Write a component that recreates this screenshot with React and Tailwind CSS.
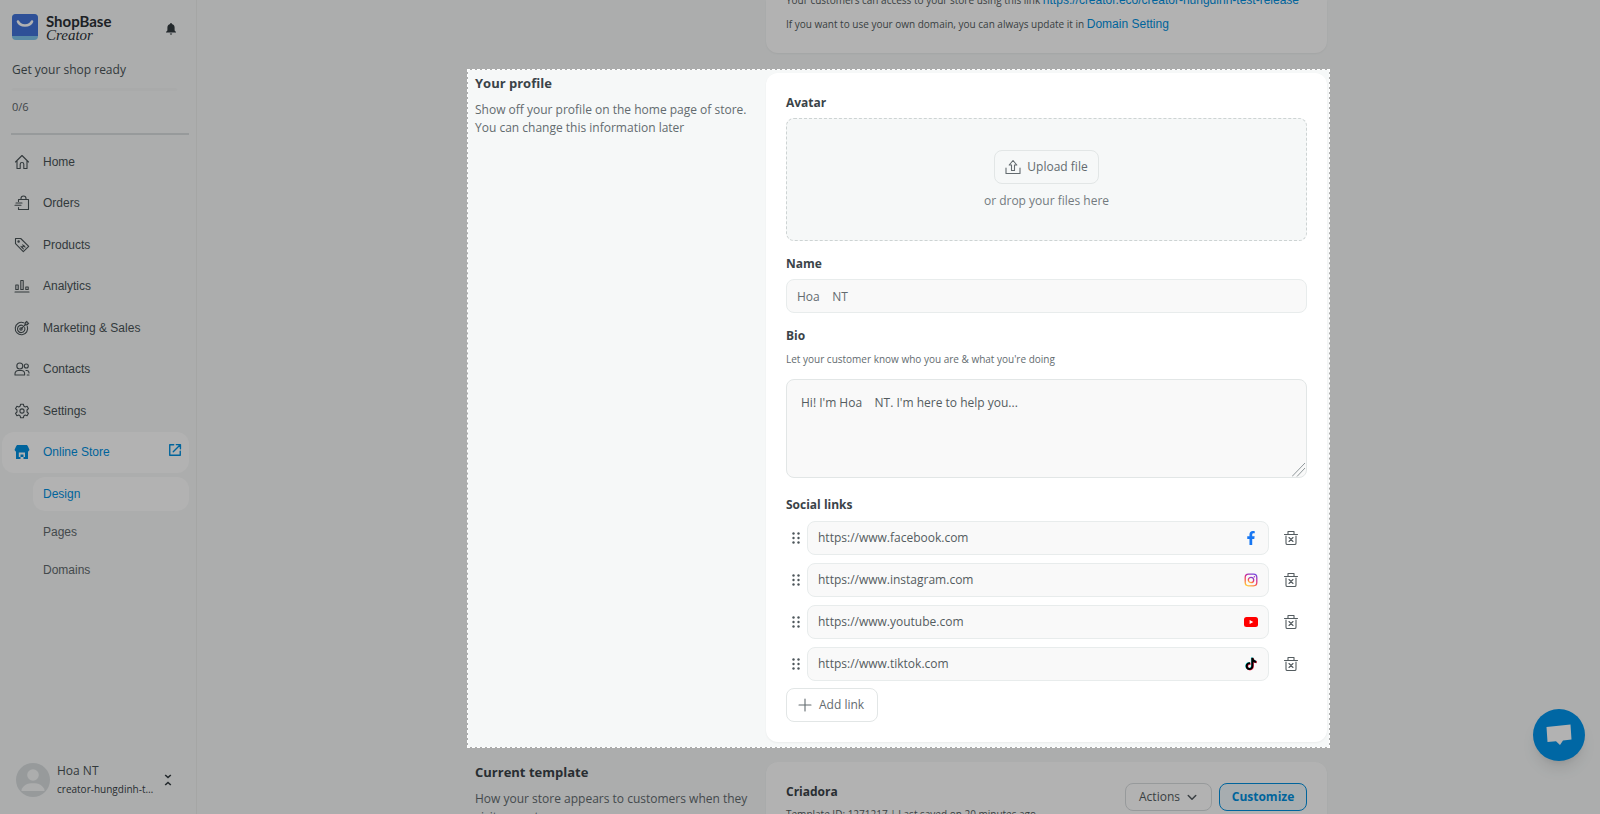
import { useState } from "react";
import { FaFacebookF } from "react-icons/fa";

const navItems = [
  { label: "Home", icon: HomeIcon },
  { label: "Orders", icon: OrdersIcon },
  { label: "Products", icon: ProductsIcon },
  { label: "Analytics", icon: AnalyticsIcon },
  { label: "Marketing & Sales", icon: MarketingIcon },
  { label: "Contacts", icon: ContactsIcon },
  { label: "Settings", icon: SettingsIcon },
];

const defaultLinks = [
  { id: "facebook", url: "https://www.facebook.com", icon: FacebookIcon },
  { id: "instagram", url: "https://www.instagram.com", icon: InstagramIcon },
  { id: "youtube", url: "https://www.youtube.com", icon: YoutubeIcon },
  { id: "tiktok", url: "https://www.tiktok.com", icon: TiktokIcon },
];

function Line({ children, className = "size-4" }) {
  return (
    <svg
      viewBox="0 0 16 16"
      className={className}
      fill="none"
      stroke="currentColor"
      strokeWidth="1.1"
      strokeLinecap="round"
      strokeLinejoin="round"
      aria-hidden="true"
    >
      {children}
    </svg>
  );
}

function HomeIcon() {
  return (
    <Line>
      <path d="M1.5 8 8 1.5 14.5 8M3 6.8v7.7h3.2v-4.2a1.8 1.8 0 0 1 3.6 0v4.2H13V6.8" />
    </Line>
  );
}

function OrdersIcon() {
  return (
    <Line>
      <path d="M4.5 6.5V4.5h10v10h-10V12.500M7 4.500V3.500a2.500 2.500 0 0 1 5 0v1M2 8h6M1 10.200h6" />
    </Line>
  );
}

function ProductsIcon() {
  return (
    <Line>
      <path d="M1.500 1.500h5.200l8 7.800-5.400 5.400-7.800-8z" />
      <circle cx="4.600" cy="4.600" r="0.700" />
      <path d="M7 9.400 9.400 11.800M8.700 7.800l2.400 2.400M8 10.500l2-2" />
    </Line>
  );
}

function AnalyticsIcon() {
  return (
    <Line>
      <path d="M1 14h14M1.800 7h2.400v4.500H1.800zM6.800 2.500h2.400v9H6.800zM11.800 9h2.400v2.500h-2.400z" />
    </Line>
  );
}

function MarketingIcon() {
  return (
    <Line>
      <path d="M9.500 2.700A6.200 6.200 0 1 0 13.300 6.500M8.500 5.400a3.700 3.700 0 1 0 2.200 2.200M6.800 9.200 12 4M11 5V3l1.800-1.700.5 1.400 1.400.5L13 5z" />
      <circle cx="7" cy="9" r="1.200" />
    </Line>
  );
}

function ContactsIcon() {
  return (
    <Line>
      <circle cx="5.800" cy="5" r="3" />
      <path d="M1 14v-1.200a3.300 3.300 0 0 1 3.300-3.300h3a3.300 3.300 0 0 1 3.300 3.300V14z" />
      <circle cx="12.300" cy="5" r="2" />
      <path d="M12 9.500h1a2.200 2.200 0 0 1 2 2.200V12M15 14h-1.800" />
    </Line>
  );
}

function SettingsIcon() {
  return (
    <Line>
      <circle cx="8" cy="8" r="2.100" />
      <path d="M6.600 1.200h2.800l.4 1.900 1.400.8 1.900-.6 1.400 2.400-1.500 1.300v2l1.500 1.300-1.400 2.400-1.900-.6-1.400.8-.4 1.900H6.600l-.4-1.900-1.400-.8-1.900.6-1.400-2.400L3 9V7L1.500 5.700l1.400-2.400 1.900.6 1.400-.8z" />
    </Line>
  );
}

function StoreIcon() {
  return (
    <svg viewBox="0 0 16 16" className="size-4" fill="currentColor" aria-hidden="true">
      <path
        fillRule="evenodd"
        d="M3 1h10l1 1.500L15.500 6 14 7.800V15H2V7.800L.5 6 2 2.500zM4.800 8.500V13h1.700v-2.500h3V15h-3v-2H11V8.500z"
      />
    </svg>
  );
}

function FacebookIcon() {
  return <FaFacebookF className="size-[14px] text-[#1877f2]" aria-hidden="true" />;
}

function InstagramIcon() {
  return (
    <svg viewBox="0 0 14 14" className="size-[14px]" fill="none" aria-hidden="true">
      <defs>
        <linearGradient id="insta" x1="0.200" y1="1" x2="0.700" y2="0">
          <stop offset="0" stopColor="#ffc93c" />
          <stop offset="0.350" stopColor="#f9574a" />
          <stop offset="0.650" stopColor="#d22c92" />
          <stop offset="1" stopColor="#7a45d8" />
        </linearGradient>
      </defs>
      <g stroke="url(#insta)" strokeWidth="1.300">
        <rect x="1.200" y="1.200" width="11.600" height="11.600" rx="3.200" />
        <circle cx="7" cy="7" r="2.700" />
      </g>
      <circle cx="10.400" cy="3.700" r="0.800" fill="#b136b0" />
    </svg>
  );
}

function YoutubeIcon() {
  return (
    <svg viewBox="0 0 14 14" className="size-[14px]" aria-hidden="true">
      <rect y="2" width="14" height="10" rx="2.500" fill="#ff0000" />
      <path d="M5.600 4.900 9.300 7 5.600 9.100z" fill="#fff" />
    </svg>
  );
}

function TiktokIcon() {
  const note =
    "M7.300.8h2.100c.1 1.700 1.200 2.800 2.900 2.900v2.100c-1.100 0-2.100-.3-2.900-.9v4.200a3.900 3.900 0 1 1-3.300-3.800v2.200a1.800 1.800 0 1 0 1.200 1.700z";
  return (
    <svg viewBox="0 0 14 14" className="size-[14px]" aria-hidden="true">
      <path d={note} fill="#25f4ee" transform="translate(-0.400 -0.300)" />
      <path d={note} fill="#fe2c55" transform="translate(0.500 0.400)" />
      <path d={note} fill="#000" />
    </svg>
  );
}

function Sidebar() {
  return (
    <aside className="flex w-[197px] shrink-0 flex-col border-r border-[#eceeed] pr-[7px]">
      <div className="flex items-start pt-[14px] pl-3">
        <svg viewBox="0 0 26 26" className="size-[26px]" aria-hidden="true">
          <rect width="26" height="26" rx="4" fill="#7fc4ec" />
          <path d="M4 0h18a4 4 0 0 1 4 4v18H0V4a4 4 0 0 1 4-4z" fill="#4273d9" />
          <path
            d="M6 7.500c2 5.300 12 5.300 14 0"
            fill="none"
            stroke="#fff"
            strokeWidth="2.600"
            strokeLinecap="round"
          />
        </svg>
        <div className="ml-2 flex flex-col text-[#2b3036]">
          <span className="font-['Lato',sans-serif] text-[15px] leading-[14px] font-bold">ShopBase</span>
          <span className="font-[cursive] text-[15px] leading-[14px] italic">Creator</span>
        </div>
        <button type="button" aria-label="Notifications" className="mt-[9px] mr-3 ml-auto text-[#333b40]">
          <svg viewBox="0 0 12 12" className="size-3" fill="currentColor" aria-hidden="true">
            <path d="M5.200.7a.8.800 0 0 1 1.600 0v.4a3.600 3.600 0 0 1 2.800 3.500v2.900l1.400 1.400v.7H1v-.7l1.400-1.400V4.600a3.600 3.600 0 0 1 2.800-3.500zM4.800 10.400h2.400a1.200 1.200 0 0 1-2.400 0z" />
          </svg>
        </button>
      </div>

      <p className="mt-[18px] pl-3 text-xs leading-5 text-[#4a5357]">Get your shop ready</p>
      <div className="mt-2 mr-3 ml-3 h-[3px] rounded-full bg-[#f2f4f4]" />
      <p className="mt-[6px] pl-3 text-[11px] leading-5 text-[#5b6468]">0/6</p>
      <div className="mt-4 ml-[11px] h-[2px] bg-[#d9dddf]" />

      <nav className="mt-[6px] grid h-[332px] auto-rows-fr pl-[2px] font-['Liberation_Sans',Arial,sans-serif] text-xs text-[#4a5357]">
        {navItems.map(({ label, icon: Icon }) => (
          <a key={label} href="#" className="flex items-center gap-[13px] pl-3">
            <Icon />
            {label}
          </a>
        ))}
        <a href="#" className="flex items-center gap-[13px] rounded-xl bg-white pr-[7px] pl-3 text-[#0090e0]">
          <StoreIcon />
          Online Store
          <Line className="mb-1 ml-auto size-[14px]">
            <path d="M6.500 2H2v12h12V9.500M9.500 1.800h4.700v4.700M14 2 6 10" strokeWidth="1.600" />
          </Line>
        </a>
      </nav>
      <div className="mt-1 ml-[33px] grid auto-rows-[38px] font-['Liberation_Sans',Arial,sans-serif] text-xs text-[#626a6e]">
        <a href="#" className="flex h-[34px] items-center rounded-xl bg-white pl-[10px] text-[#0090e0]">
          Design
        </a>
        <a href="#" className="flex h-[34px] items-center pl-[10px]">Pages</a>
        <a href="#" className="flex h-[34px] items-center pl-[10px]">Domains</a>
      </div>

      <div className="mt-auto mb-4 flex items-center pl-4">
        <svg viewBox="0 0 34 34" className="size-[34px]" aria-hidden="true">
          <circle cx="17" cy="17" r="17" fill="#d9dddf" />
          <circle cx="17" cy="12" r="5.800" fill="#f6f8f8" />
          <path d="M5.500 28v-1c1.500-5 6-6.800 11.500-6.800S27 22 28.500 27v1z" fill="#f6f8f8" />
        </svg>
        <div className="ml-[7px] w-[98px]">
          <p className="text-xs leading-[18px] text-[#4a5357]">Hoa NT</p>
          <p className="truncate text-[10px] leading-[18px] text-[#3a4348]">creator-hungdinh-test-release</p>
        </div>
        <button type="button" aria-label="Switch shop" className="ml-[9px] text-[#333b40]">
          <svg viewBox="0 0 8 12" className="h-3 w-2" fill="none" stroke="currentColor" strokeWidth="1.600" aria-hidden="true">
            <path d="M1.200 1 4 3.500 6.800 1M1.200 11 4 8.500l2.800 2.500" />
          </svg>
        </button>
      </div>
    </aside>
  );
}

function SocialLink({ link, onRemove }) {
  const Icon = link.icon;
  return (
    <li className="flex items-center">
      <svg viewBox="0 0 8 12" className="mx-[6px] h-3 w-2 text-[#4d565b]" fill="currentColor" aria-hidden="true">
        <circle cx="1.500" cy="1.500" r="1.200" />
        <circle cx="6.500" cy="1.500" r="1.200" />
        <circle cx="1.500" cy="6" r="1.200" />
        <circle cx="6.500" cy="6" r="1.200" />
        <circle cx="1.500" cy="10.500" r="1.200" />
        <circle cx="6.500" cy="10.500" r="1.200" />
      </svg>
      <label className="ml-px flex h-[34px] flex-1 items-center rounded-lg border border-[#e8ecec] bg-[#f9f9f9] px-[10px]">
        <input
          type="text"
          aria-label={link.id}
          defaultValue={link.url}
          className="min-w-0 flex-1 bg-transparent text-xs text-[#545c60] outline-none"
        />
        <Icon />
      </label>
      <button type="button" aria-label="Remove link" onClick={onRemove} className="mr-2 ml-[14px] text-[#545c60]">
        <Line>
          <path d="M1.500 4.500h13M5 4.500v-3h6v3M3 6v7.200c0 .8.500 1.300 1.300 1.300h7.400c.8 0 1.300-.5 1.300-1.300V6M6 7.500l4 4M10 7.500l-4 4" />
        </Line>
      </button>
    </li>
  );
}

function ProfileForm() {
  const [links, setLinks] = useState(defaultLinks);

  const addLink = () => {
    setLinks([...links, { id: `link-${links.length}`, url: "https://", icon: FacebookIcon }]);
  };

  return (
    <form className="mb-[5px] rounded-xl bg-white px-5 pt-[21px] pb-5 shadow-xs">
      <h3 className="text-xs leading-[18px] font-bold text-[#3a4348]">Avatar</h3>
      <div className="mt-[6px] flex h-[123px] flex-col items-center justify-center rounded-lg border border-dashed border-[#cdd3d3] bg-[#f6f8f8]">
        <button
          type="button"
          className="flex h-[34px] items-center gap-[6px] rounded-lg border border-[#e2e6e6] px-[10px] text-xs text-[#636b6f]"
        >
          <Line>
            <path d="M1 9v5.500h14V9M6.500 11.500V6H4.200L8 1.500 11.800 6H9.500v5.500z" />
          </Line>
          Upload file
        </button>
        <p className="mt-2 text-xs leading-[18px] text-[#737b7f]">or drop your files here</p>
      </div>

      <label htmlFor="name" className="mt-[14px] block text-xs leading-[18px] font-bold text-[#3a4348]">
        Name
      </label>
      <input
        id="name"
        type="text"
        defaultValue="Hoa    NT"
        className="mt-[6px] block h-[34px] w-full rounded-lg border border-[#e8ecec] bg-[#f9f9f9] px-[10px] text-xs text-[#636b6f] outline-none"
      />

      <label htmlFor="bio" className="mt-[14px] block text-xs leading-[18px] font-bold text-[#3a4348]">
        Bio
      </label>
      <p className="mt-[5px] text-[10px] leading-[18px] text-[#636b6f]">
        Let your customer know who you are &amp; what you're doing
      </p>
      <div className="relative mt-[11px]">
        <textarea
          id="bio"
          defaultValue="Hi! I'm Hoa    NT. I'm here to help you..."
          className="block h-[99px] w-full resize-none rounded-lg border border-[#e2e6e6] bg-[#f9f9f9] px-[14px] py-[14px] text-xs leading-[18px] text-[#545c60] outline-none"
        />
        <svg viewBox="0 0 14 14" className="absolute right-px bottom-px size-[14px]" stroke="#8f979a" aria-hidden="true">
          <path d="M0 13.500 13 0M5 13.500l8-8.500" />
        </svg>
      </div>

      <h3 className="mt-[18px] text-xs leading-[18px] font-bold text-[#3a4348]">Social links</h3>
      <ul className="mt-[7px] grid gap-2">
        {links.map((link) => (
          <SocialLink
            key={link.id}
            link={link}
            onRemove={() => setLinks(links.filter((l) => l.id !== link.id))}
          />
        ))}
      </ul>
      <button
        type="button"
        onClick={addLink}
        className="mt-[7px] flex h-[34px] items-center gap-[6px] rounded-lg border border-[#e2e6e6] pr-[13px] pl-[10px] text-xs text-[#636b6f]"
      >
        <Line>
          <path d="M8 2v12M2 8h12" />
        </Line>
        Add link
      </button>
    </form>
  );
}

export default function App() {
  return (
    <div className="relative flex h-screen overflow-hidden bg-[#f6f8f8] font-['Open_Sans',sans-serif]">
      <Sidebar />

      <main className="min-w-0 flex-1">
        <div className="mx-auto w-[863px]">
          <section className="grid grid-cols-[299px_561px]">
            <div className="col-start-2 flex h-[53px] flex-col justify-end rounded-b-xl bg-white px-5 pb-[17px] text-[10px] leading-6 text-[#545c60] shadow-xs">
              <p>
                Your customers can access to your store using this link{" "}
                <a href="#" className="font-['Liberation_Sans',Arial,sans-serif] text-xs text-[#0090e0]">
                  https://creator.eco/creator-hungdinh-test-release
                </a>
              </p>
              <p>
                If you want to use your own domain, you can always update it in{" "}
                <a href="#" className="font-['Liberation_Sans',Arial,sans-serif] text-xs text-[#0090e0]">
                  Domain Setting
                </a>
              </p>
            </div>
          </section>

          {/* spotlight: the huge spread dims everything around this section */}
          <section className="relative z-10 mt-4 grid grid-cols-[298px_561px] border border-dashed border-white bg-[#f6f8f8] bg-clip-padding pt-[3px] shadow-[0_0_0_2000px_rgba(0,0,0,0.3)]">
            <div className="pl-[7px]">
              <h2 className="text-[13px] leading-5 font-bold text-[#3a4348]">Your profile</h2>
              <p className="mt-2 text-xs leading-[18px] text-[#636b6f]">
                Show off your profile on the home page of store. You can change this information later
              </p>
            </div>
            <ProfileForm />
          </section>

          <section className="mt-[14px] grid grid-cols-[299px_561px]">
            <div className="pr-1 pl-2">
              <h2 className="text-[13px] leading-5 font-bold text-[#3a4348]">Current template</h2>
              <p className="mt-2 text-xs leading-[18px] text-[#636b6f]">
                How your store appears to customers when they visit your store
              </p>
            </div>
            <div className="flex rounded-xl bg-white px-5 pt-[21px] pb-5 shadow-xs">
              <div>
                <h3 className="text-xs leading-[18px] font-bold text-[#3a4348]">Criadora</h3>
                <p className="mt-1 text-[10px] leading-[18px] text-[#545c60]">
                  Template ID: 1271217 | Last saved on 20 minutes ago
                </p>
              </div>
              <div className="ml-auto flex items-start gap-[7px]">
                <button
                  type="button"
                  className="flex h-7 w-[87px] items-center justify-center gap-[6px] rounded-lg border border-[#d9dddf] text-xs text-[#545c60]"
                >
                  Actions
                  <Line className="size-3">
                    <path d="M3 6l5 5 5-5" strokeWidth="2" />
                  </Line>
                </button>
                <button
                  type="button"
                  className="h-7 w-[88px] rounded-lg border border-[#0090e0] bg-[#f0f8fd] text-xs font-bold text-[#0090e0]"
                >
                  Customize
                </button>
              </div>
            </div>
          </section>
        </div>
      </main>

      <button
        type="button"
        aria-label="Open chat"
        className="absolute right-[15px] bottom-[53px] flex size-[52px] items-center justify-center rounded-full bg-[#0094eb] shadow-lg"
      >
        <svg viewBox="0 0 26 22" className="h-[22px] w-[26px]" fill="#fff" aria-hidden="true">
          <path d="M.5 3 24.500.5 25.500 15.500l-8.500 1-3 4.500-4-3.700-8.500.7z" />
        </svg>
      </button>
    </div>
  );
}
